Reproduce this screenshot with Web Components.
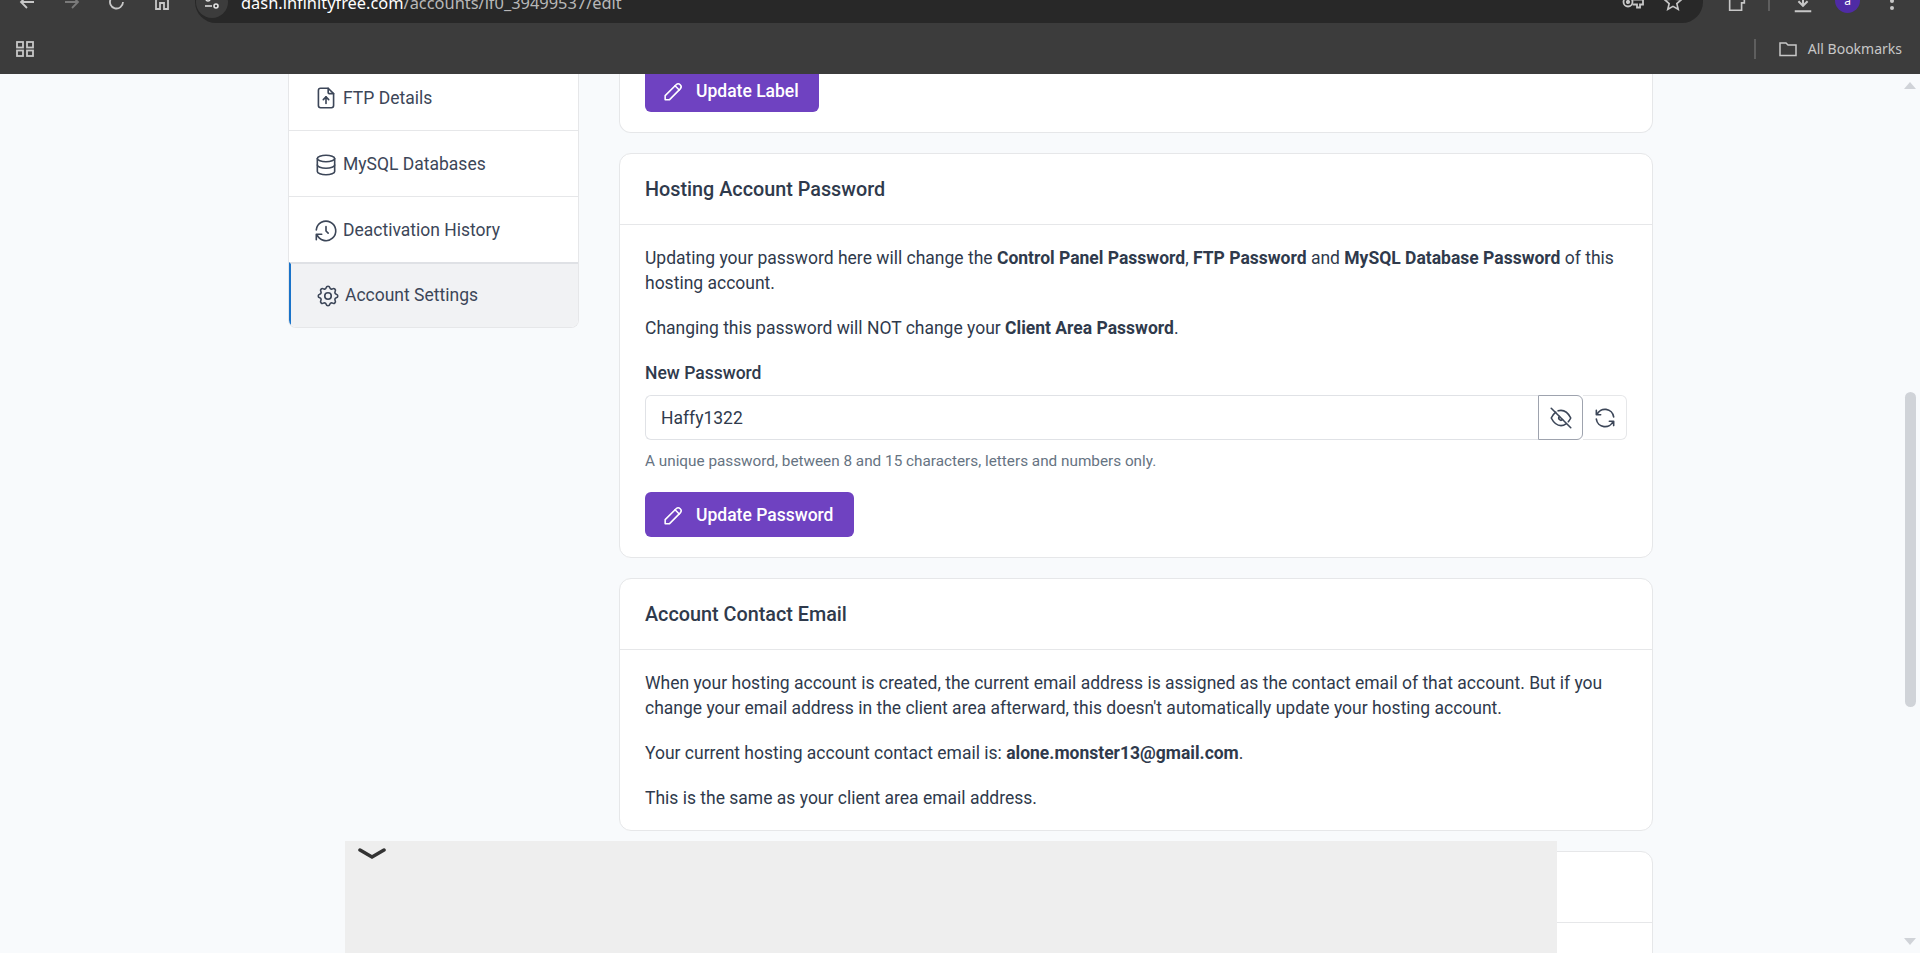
<!DOCTYPE html>
<html>
<head>
<meta charset="utf-8">
<title>Account Settings</title>
<style>
    html, body { margin: 0; height: 100%; overflow: hidden; background: #f8fafc; }
    body { font-family: Roboto, "Liberation Sans", sans-serif; }
</style>
</head>
<body>

<browser-chrome></browser-chrome>
<page-scroll>
    <side-menu slot="side">
        <side-item icon="ftp" first>FTP Details</side-item>
        <side-item icon="db">MySQL Databases</side-item>
        <side-item icon="history">Deactivation History</side-item>
        <side-item icon="gear" active>Account Settings</side-item>
    </side-menu>

    <hosting-card headless>
        <purple-button clipped>Update Label</purple-button>
    </hosting-card>

    <hosting-card heading="Hosting Account Password">
        <p>Updating your password here will change the <b>Control Panel Password</b>, <b>FTP Password</b> and <b>MySQL Database Password</b> of this hosting account.</p>
        <p>Changing this password will NOT change your <b>Client Area Password</b>.</p>
        <password-field label="New Password" value="Haffy1322" hint="A unique password, between 8 and 15 characters, letters and numbers only."></password-field>
        <purple-button>Update Password</purple-button>
    </hosting-card>

    <hosting-card heading="Account Contact Email">
        <p>When your hosting account is created, the current email address is assigned as the contact email of that account. But if you change your email address in the client area afterward, this doesn't automatically update your hosting account.</p>
        <p>Your current hosting account contact email is: <b>alone.monster13@gmail.com</b>.</p>
        <p class="last">This is the same as your client area email address.</p>
    </hosting-card>

    <hosting-card heading="&nbsp;"><div style="height: 200px"></div></hosting-card>
</page-scroll>

<script>
const ICONS = {
    ftp: '<path d="M14 3v4a1 1 0 0 0 1 1h4"/><path d="M17 21H7a2 2 0 0 1-2-2V5a2 2 0 0 1 2-2h7l5 5v11a2 2 0 0 1-2 2z"/><path d="M12 17v-6"/><path d="M9.5 13.5 12 11l2.5 2.5"/>',
    db: '<ellipse cx="12" cy="6" rx="8" ry="3"/><path d="M4 6v6c0 1.66 3.58 3 8 3s8-1.34 8-3V6"/><path d="M4 12v6c0 1.66 3.58 3 8 3s8-1.34 8-3v-6"/>',
    history: '<path d="M12 8v4l2 2"/><path d="M3.05 11a9 9 0 1 1 .5 4m-.5 5v-5h5"/>',
    gear: '<path d="M10.33 4.32c.43-1.76 2.93-1.76 3.35 0a1.72 1.72 0 0 0 2.57 1.07c1.54-.94 3.3.83 2.37 2.37a1.72 1.72 0 0 0 1.06 2.57c1.76.43 1.76 2.93 0 3.35a1.72 1.72 0 0 0-1.07 2.57c.94 1.54-.83 3.3-2.37 2.37a1.72 1.72 0 0 0-2.57 1.06c-.43 1.76-2.93 1.76-3.35 0a1.72 1.72 0 0 0-2.57-1.07c-1.54.94-3.3-.83-2.37-2.37a1.72 1.72 0 0 0-1.06-2.57c-1.76-.43-1.76-2.93 0-3.35a1.72 1.72 0 0 0 1.07-2.57c-.94-1.54.83-3.3 2.37-2.37 1 .6 2.3.07 2.57-1.07z"/><circle cx="12" cy="12" r="3"/>',
    pencil: '<path d="M4 20h4L18.5 9.5a2.83 2.83 0 0 0-4-4L4 16v4"/><path d="m13.5 6.5 4 4"/>',
    eyeOff: '<path d="M3 3l18 18"/><path d="M10.58 10.58a2 2 0 0 0 2.83 2.83"/><path d="M9.36 5.37A9.5 9.5 0 0 1 12 5c3.6 0 6.6 2.33 9 7-.7 1.36-1.44 2.52-2.23 3.47m-2.14 1.88C15.13 18.45 13.58 19 12 19c-3.6 0-6.6-2.33-9-7 1.24-2.41 2.64-4.2 4.2-5.37"/>',
    refresh: '<path d="M20 11A8.1 8.1 0 0 0 4.5 9M4 5v4h4"/><path d="M4 13a8.1 8.1 0 0 0 15.5 2m.5 4v-4h-4"/>'
};

function svg(name, size, width) {
    return `<svg width="${size}" height="${size}" viewBox="0 0 24 24" fill="none" stroke="currentColor" stroke-width="${width}" stroke-linecap="round" stroke-linejoin="round">${ICONS[name]}</svg>`;
}

class BrowserChrome extends HTMLElement {
    constructor() {
        super();
        this.attachShadow({ mode: 'open' });
        this.shadowRoot.innerHTML = `
            <style>
                :host { display: block; height: 74px; background: #3c3c3c; color: #c7c7c7; font-family: "Noto Sans", "Open Sans", sans-serif; }
                .tools { display: flex; align-items: flex-end; height: 23px; overflow: hidden; padding-left: 17px; }
                .nav { display: flex; gap: 25px; width: 178px; flex: none; padding-bottom: 11px; }
                .omni { flex: none; width: 1508px; height: 42px; box-sizing: border-box; background: #282828; border-radius: 21px; display: flex; align-items: center; padding: 0 19px 0 1px; color: #fff; font-size: 16.4px; }
                .site { width: 32px; height: 32px; border-radius: 50%; background: #3c3c3c; display: flex; align-items: center; justify-content: center; margin-right: 13px; }
                .url { flex: 1; white-space: nowrap; }
                .url span { color: #b8b8b8; }
                .right { display: flex; align-items: flex-end; flex: 1; }
                .bar { display: flex; align-items: center; height: 51px; padding: 0 18px 0 15px; justify-content: space-between; }
                .bm { display: flex; align-items: center; font-size: 14px; }
                .sep { width: 2px; height: 20px; background: #5e5e5e; margin-right: 22px; }
                .tsep { width: 2px; height: 14px; background: #5e5e5e; margin: 0 0 12px 20px; }
                .avatar { width: 25px; height: 25px; box-sizing: border-box; padding-top: 5px; border-radius: 50%; background: #4f2ba5; color: #fff; font-size: 12px; line-height: 16px; display: flex; justify-content: center; margin: 0 0 10px 21px; }
                svg { display: block; flex: none; }
            </style>
            <div class="tools">
                <div class="nav">
                    <svg width="20" height="20" viewBox="0 0 20 20" fill="none" stroke="currentColor" stroke-width="1.8"><path d="M17 10H4M10 4l-6 6 6 6"/></svg>
                    <svg width="20" height="20" viewBox="0 0 20 20" fill="none" stroke="#7a7a7a" stroke-width="1.8"><path d="M3 10h13M10 4l6 6-6 6"/></svg>
                    <svg width="20" height="20" viewBox="0 0 20 20" fill="none" stroke="currentColor" stroke-width="1.8"><path d="M16 10a6.5 6.5 0 1 1-2-4.7M14 2v4h-4"/></svg>
                    <svg width="20" height="20" viewBox="0 0 20 20" fill="none" stroke="currentColor" stroke-width="1.8"><path d="M4 17V8l6-5 6 5v9h-4v-6H8v6z"/></svg>
                </div>
                <div class="omni">
                    <div class="site">
                        <svg width="16" height="16" viewBox="0 0 16 16" fill="none" stroke="#e3e3e3" stroke-width="1.6"><circle cx="4" cy="5" r="2"/><path d="M8 5h7M1 12h7"/><circle cx="12" cy="12" r="2"/></svg>
                    </div>
                    <div class="url">dash.infinityfree.com<span>/accounts/if0_39499537/edit</span></div>
                    <svg width="24" height="24" viewBox="0 0 24 24" fill="none" stroke="#c7c7c7" stroke-width="1.8" style="margin-right:17px"><circle cx="7" cy="12" r="4.5"/><circle cx="7" cy="12" r="1.2" fill="#c7c7c7"/><path d="M11.5 9.5H22v5h-3v3h-3v-3h-4.5"/></svg>
                    <svg width="22" height="22" viewBox="0 0 24 24" fill="none" stroke="#c7c7c7" stroke-width="1.8"><path d="m12 3 2.7 6 6.3.6-4.8 4.2 1.5 6.2L12 16.8 6.3 20l1.5-6.2L3 9.6 9.3 9z"/></svg>
                </div>
                <div class="right">
                    <svg width="22" height="22" viewBox="0 0 24 24" fill="none" stroke="currentColor" stroke-width="1.8" style="margin:0 0 10px 23px"><path d="M4 21V9h5V4h8v5h3v4h-3v8z"/></svg>
                    <div class="tsep"></div>
                    <svg width="22" height="22" viewBox="0 0 24 24" fill="none" stroke="currentColor" stroke-width="2.2" style="margin:0 0 9px 22px"><path d="M12 3v11M7 10l5 5 5-5M3 21h18"/></svg>
                    <div class="avatar">a</div>
                    <svg width="6" height="20" viewBox="0 0 6 20" fill="currentColor" style="margin:0 0 7px 29px"><circle cx="3" cy="5" r="2"/><circle cx="3" cy="12" r="2"/></svg>
                </div>
            </div>
            <div class="bar">
                <svg width="20" height="20" viewBox="0 0 20 20" fill="none" stroke="#c7c7c7" stroke-width="1.8"><rect x="2" y="3" width="6" height="5.5"/><rect x="12" y="3" width="6" height="5.5"/><rect x="2" y="11.5" width="6" height="5.5"/><rect x="12" y="11.5" width="6" height="5.5"/></svg>
                <div class="bm">
                    <div class="sep"></div>
                    <svg width="20" height="20" viewBox="0 0 20 20" fill="none" stroke="currentColor" stroke-width="1.5" style="margin-right:10px"><path d="M2 16.5V4h6l2 2h8v10.5z"/></svg>
                    All Bookmarks
                </div>
            </div>
        `;
    }
}

class PageScroll extends HTMLElement {
    constructor() {
        super();
        this.attachShadow({ mode: 'open' });
        this.shadowRoot.innerHTML = `
            <style>
                :host { display: block; position: relative; height: 879px; overflow: hidden; background: #f8fafc; color: #2f3a4c; font-size: 17.5px; line-height: 25px; }
                .wrap { display: grid; grid-template-columns: 291px 1034px; column-gap: 40px; padding-left: 288px; align-items: start; }
                .main { display: flex; flex-direction: column; gap: 20px; }
                .track { position: absolute; right: 0; top: 0; bottom: 0; width: 15px; }
                .thumb { position: absolute; left: 0; width: 11px; top: 318px; height: 315px; background: #d0d3d8; border-radius: 6px; }
                .up, .down { position: absolute; left: -1px; width: 0; height: 0; border-left: 6.5px solid transparent; border-right: 6.5px solid transparent; }
                .up { top: 8px; border-bottom: 7px solid #d0d3d8; }
                .down { bottom: 8px; border-top: 7px solid #d0d3d8; }
                .cover { position: absolute; left: 345px; top: 767px; width: 1212px; bottom: 0; background: #eeeeee; }
                .cover svg { position: absolute; left: 13px; top: 6px; }
            </style>
            <div class="wrap">
                <slot name="side"></slot>
                <div class="main"><slot></slot></div>
            </div>
            <div class="track"><div class="up"></div><div class="thumb"></div><div class="down"></div></div>
            <div class="cover">
                <svg width="28" height="14" viewBox="0 0 28 14" fill="none" stroke="#333" stroke-width="3.5" stroke-linecap="round"><path d="M2 3l12 7 12-7"/></svg>
            </div>
        `;
    }
}

class SideMenu extends HTMLElement {
    constructor() {
        super();
        this.attachShadow({ mode: 'open' });
        this.shadowRoot.innerHTML = `
            <style>
                :host { display: block; background: #fff; border: 1px solid #e6e7e9; border-top: 0; border-radius: 0 0 8px 8px; overflow: hidden; }
            </style>
            <slot></slot>
        `;
    }
}

class SideItem extends HTMLElement {
    constructor() {
        super();
        this.attachShadow({ mode: 'open' });
        this.shadowRoot.innerHTML = `
            <style>
                :host { display: flex; align-items: center; gap: 4px; height: 66px; box-sizing: border-box; padding: 2px 0 0 24px; border-top: 1px solid #e6e7e9; color: #3c4658; }
                :host([first]) { height: 56px; border-top: 0; padding-top: 0; padding-bottom: 8px; }
                :host([active]) { height: 65px; background: #f1f2f4; border-top: 2px solid #dfe1e5; border-left: 2px solid #1a73c9; padding: 0 0 0 24px; }
                svg { display: block; flex: none; }
            </style>
            <span id="icon"></span>
            <slot></slot>
        `;
    }

    connectedCallback() {
        const icon = this.shadowRoot.getElementById('icon');
        icon.innerHTML = svg(this.getAttribute('icon'), 26, 1.5);
    }
}

class HostingCard extends HTMLElement {
    constructor() {
        super();
        this.attachShadow({ mode: 'open' });
        this.shadowRoot.innerHTML = `
            <style>
                :host { display: block; background: #fff; border: 1px solid #e6e7e9; border-radius: 12px; }
                :host([headless]) { border-top: 0; border-radius: 0 0 12px 12px; }
                header { height: 71px; box-sizing: border-box; padding: 0 25px; display: flex; align-items: center; border-bottom: 1px solid #e6e7e9; font-size: 19.8px; font-weight: 500; color: #2f3a4c; }
                :host([headless]) header { display: none; }
                .body { padding: 20px 25px; }
                :host([headless]) .body { padding: 0 25px 20px; }
                ::slotted(p) { margin: 0 0 19px; padding-top: 1px; }
                ::slotted(p.last) { margin-bottom: -1px; }
            </style>
            <header></header>
            <div class="body"><slot></slot></div>
        `;
    }

    connectedCallback() {
        this.shadowRoot.querySelector('header').textContent = this.getAttribute('heading') || '';
    }
}

class PurpleButton extends HTMLElement {
    constructor() {
        super();
        this.attachShadow({ mode: 'open' });
        this.shadowRoot.innerHTML = `
            <style>
                :host { display: inline-flex; align-items: center; gap: 10px; height: 45px; box-sizing: border-box; padding: 1px 21px 0 16px; background: #6f42c1; color: #fff; font-weight: 500; font-size: 17.5px; border-radius: 6px; vertical-align: top; }
                :host([clipped]) { height: 38px; padding: 0 20px 4px 16px; border-radius: 0 0 6px 6px; }
                svg { display: block; }
            </style>
            ${svg('pencil', 25, 1.5)}
            <slot></slot>
        `;
    }
}

class PasswordField extends HTMLElement {
    constructor() {
        super();
        this.attachShadow({ mode: 'open' });
        this.shadowRoot.innerHTML = `
            <style>
                :host { display: block; margin-bottom: 20px; }
                label { display: block; font-weight: 500; padding-top: 1px; margin-bottom: 9px; color: #2f3a4c; }
                .group { display: flex; height: 45px; }
                .value { flex: 1; box-sizing: border-box; border: 1px solid #e0e2e6; border-right: 0; border-radius: 6px 0 0 6px; padding: 1px 15px 0; display: flex; align-items: center; color: #2f3a4c; background: #fff; }
                .btn { width: 45px; box-sizing: border-box; display: flex; align-items: center; justify-content: center; color: #3c4658; }
                .eye { border: 1px solid #9ea3ae; border-radius: 0 6px 6px 0; }
                .ref { width: 44px; border: 1px solid #e6e7e9; border-left: 0; border-radius: 0 6px 6px 0; }
                small { display: block; font-size: 15.3px; line-height: 21px; color: #667382; margin-top: 11px; }
            </style>
            <label></label>
            <div class="group">
                <div class="value"></div>
                <div class="btn eye">${svg('eyeOff', 26, 1.5)}</div>
                <div class="btn ref">${svg('refresh', 26, 1.5)}</div>
            </div>
            <small></small>
        `;
    }

    connectedCallback() {
        this.shadowRoot.querySelector('label').textContent = this.getAttribute('label');
        this.shadowRoot.querySelector('.value').textContent = this.getAttribute('value');
        this.shadowRoot.querySelector('small').textContent = this.getAttribute('hint');
    }
}

customElements.define('browser-chrome', BrowserChrome);
customElements.define('page-scroll', PageScroll);
customElements.define('side-menu', SideMenu);
customElements.define('side-item', SideItem);
customElements.define('hosting-card', HostingCard);
customElements.define('purple-button', PurpleButton);
customElements.define('password-field', PasswordField);
</script>
</body>
</html>
